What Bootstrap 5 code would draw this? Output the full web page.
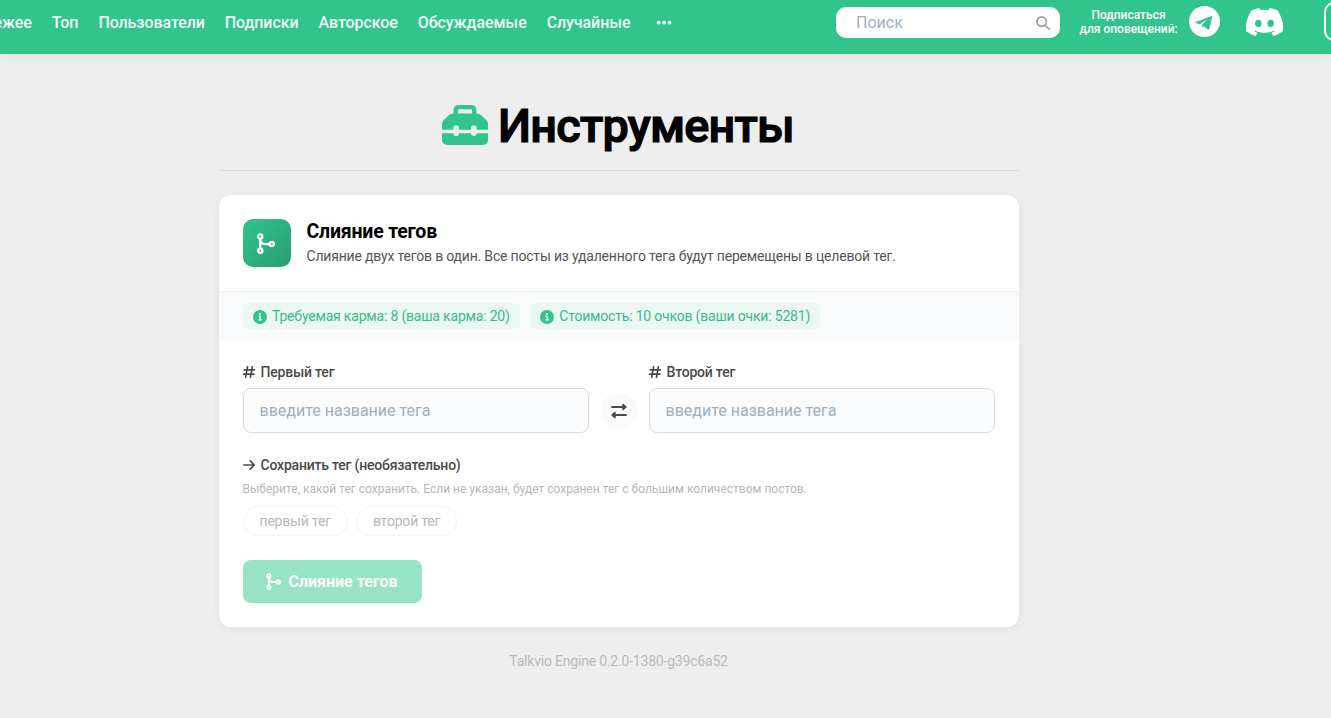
<!DOCTYPE html>
<html lang="ru">
<head>
<meta charset="utf-8">
<title>Инструменты</title>
<link href="https://cdn.jsdelivr.net/npm/bootstrap@5.3.0/dist/css/bootstrap.min.css" rel="stylesheet">
<style>
:root{--brand:#31c48d}
body{font-family:Roboto,"Liberation Sans",sans-serif;background:#eee;color:#000;overflow:hidden;height:718px}
svg{display:block;flex:none}
.topbar{height:54px;background:var(--brand);box-shadow:0 0 16px rgba(0,0,0,.09);color:#fff}
.topbar>*{flex:none}
.menu{width:671.5px;height:45px;gap:20px;font-size:16px;font-weight:500;letter-spacing:-.08px;white-space:nowrap}
.menu a{color:#f0fff8;text-decoration:none}
.search-box{width:224px;height:31px;margin:7px 0 0 164.5px;background:#fff;border-radius:10px;padding:0 10px 0 20px}
.search-box input{border:0;outline:0;font-size:16px;padding:0;width:150px;background:none}
input::placeholder,.tag-field input::placeholder{color:#a0aec0;opacity:1}
.notify{font-size:12px;line-height:14px;font-weight:500;width:98px;margin:8px 0 0 19.5px;white-space:nowrap}
.login{width:60px;height:39px;margin:2px 0 0 41.5px;border:2px solid #fff;border-radius:10px}
.page{width:800px;margin-left:218.5px}
.headline{height:117px;border-bottom:1px solid #dcdcdc;padding:1px 1px 0 0}
.headline h1{font-size:46.8px;font-weight:500;-webkit-text-stroke:1.2px #000;line-height:58px;letter-spacing:-.75px;margin:26px 0 0}
.tool{margin-top:24px;height:432px;border-radius:12px;background:#fff;box-shadow:0 2px 8px rgba(0,0,0,.06);overflow:hidden}
.tool-head{height:96px;padding:24px 24px 0;gap:16px}
.tool-icon{width:48px;height:48px;border-radius:10px;background:linear-gradient(135deg,#31c48d,#279d71)}
.tool-head h2{font-size:19.5px;font-weight:700;line-height:23px;letter-spacing:-.2px;margin:0 0 3px;padding-top:.5px}
.tool-head p{font-size:14px;line-height:21px;letter-spacing:-.19px;color:#555}
.reqs{height:49px;padding:0 24px;gap:10px;background:#f8fafb;border-top:1px solid #f0f2f3}
.req{height:26px;padding:1px 10px 0;gap:5.5px;border-radius:6px;background:#ebf7f2;color:#3cb98a;font-size:14px;letter-spacing:-.19px;white-space:nowrap}
.tool-body{padding:23px 24px 0}
.field-label{font-size:14px;font-weight:500;line-height:18px;height:18px;letter-spacing:-.2px;color:#4a4a4a;gap:6px}
.tag-field{width:346px}
.tag-field input{height:45px;margin-top:7px;border:1px solid #d9dcdf;border-radius:8px;background:#fafcfe;padding:0 16px;font-size:16px}
.swap{width:36px;height:36px;background:#f9fafa;margin:30px 12px 0}
.keep{margin-top:23px}
.hint{font-size:12px;line-height:16px;color:#b4b7ba;margin:7px 0 9px}
.pill{height:30px;border:1px solid #f1f2f3;border-radius:15px;padding:0 16px;font-size:14px;letter-spacing:-.19px;color:#b6b7b8}
.merge-btn{width:179px;height:43px;margin-top:24px;border-radius:8px;background:#98e2c6!important;border:0;opacity:1!important;color:#fff!important;font-size:16px;font-weight:700;gap:7px;padding:0;white-space:nowrap}
.version{margin-top:25px;font-size:14px;line-height:18px;letter-spacing:-.2px;color:#b9b9b9}
</style>
</head>
<body>
<svg width="0" height="0" class="position-absolute">
  <symbol id="merge" viewBox="0 0 18 21"><g fill="none" stroke="currentColor" stroke-width="2.3"><circle cx="3.2" cy="3.5" r="2.1"/><circle cx="3.2" cy="17.7" r="2.1"/><circle cx="14.8" cy="11.1" r="2.1"/><path d="M3.2 5.5V15.7M3.2 5.5C3.4 9.5 5.5 11.1 8.5 11.1H12.8"/></g></symbol>
  <symbol id="info" viewBox="0 0 14 14"><circle cx="7" cy="7" r="7" fill="#31c48d"/><circle cx="7" cy="4" r="1" fill="#fff"/><path d="M5.6 6.4H7.2V9.8M5.3 9.9H8.8" fill="none" stroke="#fff" stroke-width="1.3"/></symbol>
  <symbol id="hash" viewBox="0 0 12 12"><path d="M4.5.8 2.7 11.2M9.3.8 7.5 11.2M1.2 3.8H11.5M.6 8.2H10.9" fill="none" stroke="currentColor" stroke-width="1.7" stroke-linecap="round"/></symbol>
</svg>

<header class="topbar d-flex align-items-start">
  <nav class="menu d-flex align-items-center justify-content-end">
    <a href="#">Свежее</a><a href="#">Топ</a><a href="#">Пользователи</a><a href="#">Подписки</a><a href="#">Авторское</a><a href="#">Обсуждаемые</a><a href="#">Случайные</a>
    <svg class="ms-1" width="17" height="5" viewBox="0 0 17 5" fill="#fff"><circle cx="3.7" cy="2.6" r="1.9"/><circle cx="9.2" cy="2.6" r="1.9"/><circle cx="14.7" cy="2.6" r="1.9"/></svg>
  </nav>
  <div class="search-box d-flex align-items-center justify-content-between">
    <input type="text" placeholder="Поиск">
    <svg width="14" height="14" viewBox="0 0 14 14" fill="none" stroke="#a0a0a0" stroke-width="1.7" stroke-linecap="round"><circle cx="5.6" cy="5.6" r="4.7"/><path d="m9.1 9.1 4 4"/></svg>
  </div>
  <div class="notify text-center">Подписаться<br>для оповещений:</div>
  <svg style="margin:6px 0 0 11.5px" width="31" height="31" viewBox="0 0 31 31"><circle cx="15.5" cy="15.5" r="15.5" fill="#fff"/><path d="M22.6 10.1 6.7 16.1Q5.8 16.7 6.9 17.1L10.8 18.2 18.6 13 13.2 18.6 12.6 21.6 14.8 20.2 18.8 23.4Q20 23.8 20.4 22.6L23.2 10.8Q23.3 9.9 22.6 10.1Z" fill="#31c48d"/></svg>
  <svg style="margin:8px 0 0 25.5px" width="37" height="28" viewBox="27 32 586 448" preserveAspectRatio="none" fill="#fff"><path d="M524.5 69.8a1.5 1.5 0 0 0-.8-.7A485 485 0 0 0 404.1 32a1.8 1.8 0 0 0-1.9.9 337 337 0 0 0-14.9 30.6 448 448 0 0 0-134.5 0 310 310 0 0 0-15.1-30.6 1.9 1.9 0 0 0-1.9-.9 484 484 0 0 0-119.7 37.1 1.7 1.7 0 0 0-.8.7C39.1 183.7 18.2 294.7 28.4 404.4a2 2 0 0 0 .8 1.3A488 488 0 0 0 176 479.9a1.9 1.9 0 0 0 2.1-.7 348 348 0 0 0 30-48.8 1.9 1.9 0 0 0-1-2.6 321 321 0 0 1-45.9-21.8 1.9 1.9 0 0 1-.2-3.2c3.1-2.3 6.2-4.7 9.2-7.1a1.8 1.8 0 0 1 1.9-.3c96.2 43.9 200.4 43.9 295.5 0a1.8 1.8 0 0 1 1.9.3c2.9 2.4 6 4.8 9.1 7.1a1.9 1.9 0 0 1-.2 3.2 301 301 0 0 1-45.8 21.8 1.9 1.9 0 0 0-1 2.6 391 391 0 0 0 30 48.8 1.9 1.9 0 0 0 2.1.7 486 486 0 0 0 147-74.2 1.9 1.9 0 0 0 .8-1.3c12.2-126.8-20.6-236.9-87-334.6ZM222.5 337.6c-29 0-52.9-26.6-52.9-59.3s23.4-59.2 52.9-59.2c29.7 0 53.3 26.8 52.8 59.2 0 32.7-23.4 59.3-52.8 59.3Zm195.4 0c-29 0-52.9-26.6-52.9-59.3s23.4-59.2 52.9-59.2c29.6 0 53.3 26.8 52.8 59.2 0 32.7-23.2 59.3-52.8 59.3Z"/></svg>
  <div class="login"></div>
</header>

<main class="page">
  <div class="headline d-flex align-items-center justify-content-center">
    <svg style="margin:25px 10px 0 0" width="46" height="40" viewBox="0 0 46 40"><path d="M11.5 8.5V5a5 5 0 0 1 5-5H29.5a5 5 0 0 1 5 5V8.5Q37.5 8.5 39.5 10.5L44.7 15.5Q46 17 46 19V24.8H34.6V23a2.8 2.8 0 0 0-5.6 0V24.8H17V23a2.8 2.8 0 0 0-5.6 0V24.8H0V19Q0 17 1.3 15.5L6.5 10.5Q8.5 8.5 11.5 8.5ZM16 8.5H30V5.2Q30 4.2 29 4.2H17Q16 4.2 16 5.2ZM0 28.2H11.4a2.8 2.8 0 0 0 5.6 0H29a2.8 2.8 0 0 0 5.6 0H46V35a5 5 0 0 1-5 5H5a5 5 0 0 1-5-5Z" fill="#31c48d" fill-rule="evenodd"/></svg>
    <h1>Инструменты</h1>
  </div>

  <section class="tool">
    <div class="tool-head d-flex">
      <div class="tool-icon d-flex align-items-center justify-content-center text-white flex-shrink-0"><svg style="margin-right:2px" width="18" height="21"><use href="#merge"/></svg></div>
      <div><h2>Слияние тегов</h2><p class="mb-0">Слияние двух тегов в один. Все посты из удаленного тега будут перемещены в целевой тег.</p></div>
    </div>
    <div class="reqs d-flex align-items-center">
      <div class="req d-flex align-items-center"><svg width="14" height="14"><use href="#info"/></svg><span>Требуемая карма: 8 (ваша карма: 20)</span></div>
      <div class="req d-flex align-items-center"><svg width="14" height="14"><use href="#info"/></svg><span>Стоимость: 10 очков (ваши очки: 5281)</span></div>
    </div>
    <div class="tool-body">
      <div class="d-flex">
        <div class="tag-field"><label class="field-label d-flex align-items-center"><svg width="12" height="12"><use href="#hash"/></svg><span>Первый тег</span></label><input class="form-control" type="text" placeholder="введите название тега"></div>
        <div class="swap rounded-circle d-flex align-items-center justify-content-center flex-shrink-0"><svg width="16" height="16" viewBox="0 0 16 16" fill="none" stroke="#4a4a4a" stroke-width="2" stroke-linecap="round" stroke-linejoin="round"><path d="M1 4H14M15 12H2"/><path d="M12 1.4 15 4 12 6.6ZM4 9.4 1 12 4 14.6Z" fill="#4a4a4a" stroke-width="1.4"/></svg></div>
        <div class="tag-field"><label class="field-label d-flex align-items-center"><svg width="12" height="12"><use href="#hash"/></svg><span>Второй тег</span></label><input class="form-control" type="text" placeholder="введите название тега"></div>
      </div>
      <div class="keep">
        <div class="field-label d-flex align-items-center"><svg width="12" height="12" viewBox="0 0 12 12" fill="none" stroke="currentColor" stroke-width="1.7" stroke-linecap="round" stroke-linejoin="round"><path d="M.8 6H11.2M7.2 1.8 11.3 6 7.2 10.2"/></svg><span>Сохранить тег (необязательно)</span></div>
        <div class="hint">Выберите, какой тег сохранить. Если не указан, будет сохранен тег с большим количеством постов.</div>
        <div class="d-flex gap-2"><span class="pill d-flex align-items-center">первый тег</span><span class="pill d-flex align-items-center">второй тег</span></div>
      </div>
      <button class="merge-btn btn d-flex align-items-center justify-content-center" disabled><svg width="15" height="17"><use href="#merge"/></svg>Слияние тегов</button>
    </div>
  </section>
  <footer class="version text-center">Talkvio Engine 0.2.0-1380-g39c6a52</footer>
</main>
<script src="https://cdn.jsdelivr.net/npm/bootstrap@5.3.0/dist/js/bootstrap.bundle.min.js"></script>
</body>
</html>
